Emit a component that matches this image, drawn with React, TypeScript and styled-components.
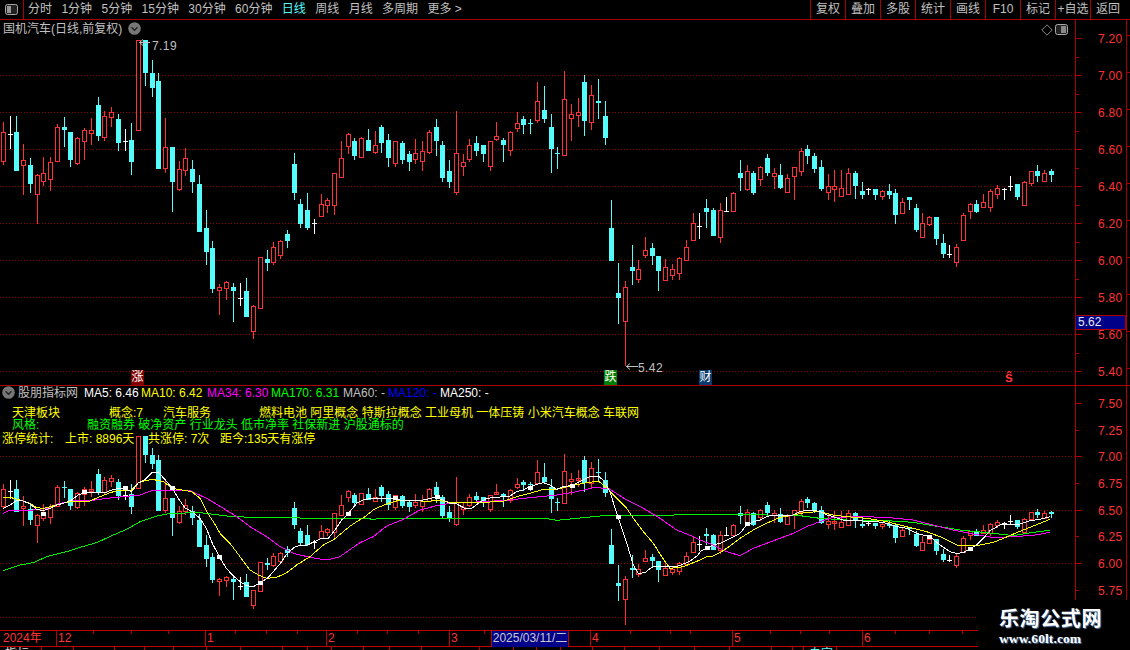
import React from "react";
import styled, { createGlobalStyle } from "styled-components";

type Candle = [number, string, number, number, number, number];
type Pt = [number, number];

const FONT = `"Liberation Sans", "Noto Sans CJK SC", sans-serif`;
const RED = "#ff3232";
const CYAN = "#54fcfc";
const LINE = "#a80000";

const GlobalStyle = createGlobalStyle`
  html, body { margin: 0; padding: 0; background: #000; overflow: hidden; }
  #root { width: 1130px; height: 650px; }
`;

const groupA: (string | number)[][] = [
  [10,"r",276,306,392,405],[31,"w",258,313,313,357],[49,"c",258,306,423,423],[70,"r",342,391,404,495],[91,"c",384,405,462,489],
  [112,"r",432,436,491,582],[130,"r",381,430,452,468],[151,"r",381,397,446,483],[172,"r",282,292,392,396],[193,"c",261,291,300,351],
  [211,"c",306,306,390,411],[232,"r",321,325,399,405],[253,"r",294,301,332,390],[274,"r",264,301,308,345],[295,"c",201,225,318,333],
  [313,"r",243,259,320,333],[334,"r",231,247,260,291],[355,"c",252,267,339,363],[376,"w",297,334,334,363],[394,"c",279,330,396,435],
  [415,"r",30,30,299,299],[436,"c",30,30,129,168],[457,"c",90,129,174,201],[475,"c",129,153,417,417],[496,"r",264,352,413,429],
  [517,"c",352,352,456,546],[538,"r",393,418,476,483],[556,"r",354,385,419,438],[577,"c",390,417,456,489],[598,"c",435,462,606,606],
  [619,"c",540,594,666,705],[637,"c",633,654,777,789],[658,"r",762,772,779,855],[679,"r",753,757,773,810],[700,"c",759,771,783,876],
  [721,"w",759,804,804,828],[739,"c",744,783,861,861],[760,"r",825,829,902,927],[781,"r",680,680,833,833],[802,"c",660,687,699,723],
  [820,"r",636,652,695,705],[841,"r",630,634,674,687],[862,"c",600,612,633,654],[883,"c",369,402,489,510],[901,"c",507,522,582,594],
  [922,"c",489,540,594,600],
];
const groupB: (string | number)[][] = [
  [13,"w",477,490,490,522],[34,"r",402,433,467,467],[52,"r",414,421,434,459],[73,"r",340,340,434,465],[94,"r",243,295,350,354],
  [115,"r",219,223,257,282],[133,"c",234,243,288,300],[154,"r",232,235,291,294],[175,"c",207,240,273,273],[196,"r",213,256,275,282],
  [214,"c",195,201,249,279],[235,"c",222,240,294,321],[256,"r",244,244,308,321],[277,"c",243,249,300,312],[298,"c",273,282,306,333],
  [316,"r",237,280,296,312],[337,"r",243,274,302,333],[358,"r",210,216,276,282],[379,"c",177,201,243,288],[397,"c",243,255,354,366],
  [418,"c",300,333,366,384],[439,"r",153,280,395,405],[460,"r",282,307,317,348],[478,"r",237,256,297,306],[499,"c",228,249,273,288],
  [520,"c",255,255,282,306],[541,"r",243,244,318,333],[559,"r",186,229,236,243],[580,"c",234,240,255,306],[601,"r",213,217,269,288],
  [622,"r",157,190,204,216],[640,"c",168,177,195,222],[661,"c",177,190,193,222],[682,"r",66,124,180,189],[703,"c",78,150,177,189],
  [724,"c",162,201,267,339],[742,"c",261,280,283,327],[763,"r",33,118,285,288],[784,"r",132,163,173,243],[805,"r",114,157,164,201],
  [823,"c",45,66,183,228],[844,"r",75,106,185,210],[865,"c",57,123,129,177],[886,"c",123,168,234,255],[904,"c",420,504,603,603],
  [925,"c",609,699,714,792],[946,"r",663,682,782,918],[967,"c",555,621,633,675],[985,"r",600,628,656,669],[1006,"r",531,571,584,594],
  [1027,"c",549,564,588,615],[1045,"c",588,588,633,693],
];
const groupC: (string | number)[][] = [
  [16,"r",387,411,450,450],[37,"r",402,418,435,450],[58,"r",381,385,428,450],[79,"r",330,351,390,393],[100,"r",249,280,330,330],
  [118,"w",249,289,289,327],[139,"c",207,234,246,294],[160,"c",234,240,318,318],[181,"r",219,241,321,339],[199,"w",201,242,242,246],
  [220,"r",186,190,243,243],[241,"c",90,129,144,183],[262,"r",105,124,177,183],[280,"c",123,129,189,195],[301,"r",108,112,147,168],
  [322,"c",72,84,129,138],[343,"r",114,130,137,177],[361,"c",102,135,174,177],[382,"r",132,145,186,186],[403,"r",111,112,137,210],
  [424,"r",54,64,124,138],[442,"c",45,57,78,102],[463,"c",69,78,117,129],[484,"c",90,111,177,183],[505,"r",132,169,186,210],
  [523,"r",120,169,176,216],[544,"r",120,175,198,201],[565,"r",114,130,191,192],[586,"c",123,129,168,207],[607,"c",156,183,195,207],
  [625,"w",174,177,177,195],[646,"c",177,177,195,210],[667,"r",180,184,197,210],[688,"c",162,183,195,207],[706,"c",177,189,255,282],
  [727,"r",204,217,248,248],[748,"c",201,201,210,240],[769,"c",222,234,300,306],[787,"r",249,280,320,320],[808,"r",258,262,282,288],
  [829,"c",261,261,327,345],[850,"c",312,339,372,384],[868,"w",345,373,373,384],[889,"r",342,352,396,411],[910,"r",249,256,330,333],
  [931,"r",219,223,242,267],[949,"c",210,222,246,249],[970,"r",192,217,231,234],[991,"r",177,184,231,246],[1012,"r",165,175,191,207],
  [1033,"w",174,178,178,210],[1051,"w",138,169,169,183],[1072,"c",162,162,201,210],[1093,"r",153,157,224,225],[1114,"r",123,124,158,168],
  [1132,"c",105,123,138,156],[1153,"r",120,130,153,153],[1174,"c",117,123,135,156],
];

const toCandles = (g: (string | number)[][], xo: number, yo: number): Candle[] =>
  g.map((c) => [
    Math.round(xo + (c[0] as number) / 3),
    c[1] as string,
    yo + (c[2] as number) / 3,
    yo + (c[3] as number) / 3,
    yo + (c[4] as number) / 3,
    yo + (c[5] as number) / 3,
  ]);

const candles: Candle[] = [...toCandles(groupA, 0, 30), ...toCandles(groupB, 310, 60), ...toCandles(groupC, 660, 130)];

const lower = (y: number) => 435 + (y - 38) * 0.5795;
const lowerCandles: Candle[] = candles.map((c) => [c[0], c[1], lower(c[2]), lower(c[3]), lower(c[4]), lower(c[5])]);

const seg = (pts: number[], xo: number, yo: number): Pt[] => {
  const out: Pt[] = [];
  for (let i = 0; i < pts.length; i += 2) out.push([xo + pts[i] / 3, yo + pts[i + 1] / 3]);
  return out;
};

const white = [
  ...seg([10,205,30,195,50,182,70,183,90,192,110,208,130,212,150,205,172,195,195,188,215,180,235,165,255,158,295,158,315,158,335,150,355,145,375,148,395,155,415,128,436,118,457,97,475,96,496,120,517,145,538,180,556,205,577,215,600,235,619,265,637,310,658,350,679,385,700,408,721,425,739,437,760,440,781,428,802,415,820,395,841,370,862,340,883,322,901,316,922,315,943,305,964,295,985,295,1005,270,1025,240,1044,222], 0, 440),
  ...seg([20,190,40,180,60,176,80,174,100,176,130,176,150,180,170,180,200,183,230,178,255,172,280,180,300,190,320,192,345,205,365,205,385,190,410,175,440,172,460,170,480,168,500,155,520,150,540,140,560,133,580,128,600,135,620,148,640,140,660,137,680,130,700,120,720,110,745,108,765,125,780,155,800,220,820,280,835,325,850,375,865,400,885,398,905,382,925,378,945,380,965,378,985,378,1005,370,1025,360,1045,345], 350, 440),
  ...seg([0,245,20,235,40,225,60,220,80,210,100,200,120,190,140,165,160,155,180,150,200,140,220,135,240,135,260,135,280,135,300,125,320,120,340,120,360,125,380,135,400,140,430,150,470,150,500,155,530,155,560,160,590,170,620,175,650,190,690,200,720,225,750,245,770,250,790,248,810,237,830,225,850,205,870,182,900,165,930,162,960,162,990,152,1020,148,1050,140], 700, 470),
];
const yellow = [
  ...seg([10,172,30,172,60,180,90,190,110,203,130,205,150,200,180,192,210,185,240,185,270,183,300,170,330,158,360,150,395,150,415,128,436,122,457,118,490,125,517,145,545,150,575,155,600,175,620,215,640,245,660,280,690,310,720,350,750,390,775,405,800,415,830,412,860,398,890,375,930,350,970,315,1000,300,1030,275,1048,260], 0, 440),
  ...seg([20,245,45,230,70,210,90,200,115,190,150,180,190,180,230,185,260,180,300,187,350,187,400,187,460,184,500,170,540,160,580,148,620,148,660,138,700,130,745,123,775,148,800,175,830,205,850,235,880,275,910,310,935,350,960,385,1000,380,1045,362], 350, 440),
  ...seg([0,270,20,260,40,258,60,248,80,235,120,205,160,180,200,160,240,142,280,135,320,127,360,125,400,135,440,140,500,145,560,155,620,170,680,185,720,200,770,225,830,227,880,217,910,205,950,188,1000,168,1050,148], 700, 470),
];
const magenta = [
  ...seg([10,220,25,212,60,210,100,210,140,205,180,190,220,183,270,182,320,175,370,170,420,165,460,150,520,150,570,152,620,175,670,205,710,230,750,260,800,290,840,320,880,340,930,352,980,360,1020,350,1048,330], 0, 440),
  ...seg([30,308,70,290,110,258,160,238,210,210,260,197,300,190,400,185,480,180,540,173,620,165,680,155,730,143,775,145,830,180,880,205,930,235,980,270,1030,290,1045,298], 350, 440),
  ...seg([0,210,40,225,80,245,120,257,160,235,240,205,280,190,320,170,360,155,400,142,480,140,560,142,640,150,700,165,760,180,820,192,880,203,940,200,1000,196,1050,187], 700, 470),
];
const green = [
  ...seg([10,392,60,375,100,368,140,350,200,335,240,322,290,308,340,285,380,268,420,245,470,228,510,220,600,218,680,228,750,232,1045,236], 0, 440),
  ...seg([60,236,65,239,85,236,590,236,620,241,680,235,750,228,900,226,1045,224], 350, 440),
  ...seg([0,133,200,135,300,137,360,145,440,150,560,152,640,157,700,167,780,180,880,190,940,197,1000,187,1050,181], 700, 470),
];
const dots: Pt[] = [[43,514],[84,492],[125,488],[172,488],[219,557],[260,583],[348,514],[395,498],[437,497],[530,488],[572,486],[618,517],[707,548],[747,524],[929,537],[970,549]];

const poly = (p: Pt[]) => p.map((q) => q.join(",")).join(" ");

/* ---------- Layout ---------- */
const Page = styled.div`
  position: relative;
  width: 1130px;
  height: 650px;
  background: #000;
  overflow: hidden;
  display: flex;
  flex-direction: column;
  font: 12px/14px ${FONT};
  color: #c0c0c0;
`;
const Toolbar = styled.header`
  height: 19px;
  box-sizing: content-box;
  border-bottom: 1px solid ${LINE};
  display: flex;
  align-items: stretch;
  padding-right: 5px;
`;
const ToggleCell = styled.div`
  width: 23px;
  border-right: 1px solid ${LINE};
  display: flex;
  align-items: center;
  justify-content: center;
`;
const PeriodList = styled.nav`
  display: flex;
  align-items: center;
  gap: 9.4px;
  padding-left: 4px;
`;
const Period = styled.span<{ $active?: boolean }>`
  color: ${(p) => (p.$active ? CYAN : "#c0c0c0")};
  white-space: nowrap;
`;
const ActionList = styled.div`
  display: flex;
  margin-left: auto;
`;
const Action = styled.span`
  width: 35px;
  box-sizing: border-box;
  border-left: 1px solid ${LINE};
  display: flex;
  align-items: center;
  justify-content: center;
  white-space: nowrap;
`;
const Pane = styled.section<{ $h: number }>`
  position: relative;
  display: flex;
  height: ${(p) => p.$h}px;
`;
const UpperPane = styled(Pane)`
  border-bottom: 1px solid ${LINE};
`;
const ChartSvg = styled.svg`
  display: block;
  flex: none;
  shape-rendering: crispEdges;
`;
const AxisSvg = styled.svg`
  display: block;
  flex: none;
`;
const AxisText = styled.text`
  font: 12px ${FONT};
  fill: ${RED};
  letter-spacing: 0.3px;
`;
const ExtremeText = styled.text`
  font: 12px ${FONT};
  fill: #c0c0c0;
  letter-spacing: 0.4px;
`;
const Title = styled.div`
  position: absolute;
  top: 2px;
  left: 3px;
  display: flex;
  align-items: center;
  gap: 6px;
  white-space: nowrap;
`;
const CornerIcons = styled.div`
  position: absolute;
  top: 4px;
  left: 1041px;
  display: flex;
  gap: 2px;
  align-items: center;
`;
const Badge = styled.span<{ $x: number; $bg: string }>`
  position: absolute;
  bottom: 0;
  left: ${(p) => p.$x}px;
  width: 13px;
  height: 15px;
  background: ${(p) => p.$bg};
  color: #fff;
  text-align: center;
  line-height: 15px;
`;
const SignMark = styled.span`
  position: absolute;
  bottom: 0;
  left: 1005px;
  color: ${RED};
  font-size: 14px;
  font-weight: 700;
  line-height: 15px;
`;
const PriceTag = styled.div`
  position: absolute;
  left: 1075px;
  top: 295px;
  width: 51px;
  height: 15px;
  box-sizing: border-box;
  border: 1px solid ${LINE};
  background: #000088;
  color: #e8e8e8;
  padding-left: 2px;
  line-height: 13px;
`;
const Overlay = styled.div`
  position: absolute;
  top: 0;
  left: 0;
  display: flex;
  flex-direction: column;
  white-space: nowrap;
`;
const Legend = styled.div`
  display: flex;
  align-items: center;
  height: 14px;
  padding-left: 2px;
`;
const LegendName = styled.span`
  margin: 0 6px 0 3px;
`;
const LegendItem = styled.span<{ $color: string; $w: number }>`
  color: ${(p) => p.$color};
  width: ${(p) => p.$w}px;
`;
const InfoLine = styled.div<{ $cols: string; $left: number; $color: string; $gap?: number }>`
  display: grid;
  grid-template-columns: ${(p) => p.$cols};
  padding-left: ${(p) => p.$left}px;
  margin-top: ${(p) => p.$gap ?? 0}px;
  height: 12px;
  line-height: 12px;
  color: ${(p) => p.$color};
`;
const TimeAxis = styled.div`
  position: relative;
  width: 978px;
  height: 16px;
  border-top: 1px solid #c00000;
  border-bottom: 1px solid #c00000;
  box-sizing: content-box;
  display: flex;
  color: ${RED};
  line-height: 15px;
`;
const TimeCell = styled.span<{ $w: number }>`
  width: ${(p) => p.$w}px;
  box-sizing: border-box;
  border-left: 1px solid #c00000;
  padding-left: 1px;
  &:first-child {
    border-left: 0;
    padding-left: 3px;
  }
`;
const TickStrip = styled.svg`
  position: absolute;
  top: 0;
  left: 0;
  shape-rendering: crispEdges;
`;
const DateTag = styled.span`
  position: absolute;
  left: 491px;
  top: 0;
  width: 78px;
  height: 16px;
  background: #000088;
  border: solid #c00000;
  border-width: 0 1px;
  box-sizing: border-box;
  color: #c8c8c8;
  text-align: center;
  white-space: nowrap;
  overflow: hidden;
  line-height: 15px;
`;
const TabRow = styled.footer`
  display: flex;
  height: 3px;
  overflow: hidden;
  line-height: 14px;
`;
const Tab = styled.span<{ $w: number; $color?: string }>`
  width: ${(p) => p.$w}px;
  flex: none;
  box-sizing: border-box;
  border-right: 1px solid #c00000;
  padding-left: 5px;
  color: ${(p) => p.$color ?? "#e0e0e0"};
  white-space: nowrap;
`;
const Watermark = styled.aside`
  position: absolute;
  right: 0;
  bottom: 0;
  width: 152px;
  height: 50px;
  background: #000;
  display: flex;
  flex-direction: column;
  padding: 6px 0 0 21px;
  box-sizing: border-box;
  color: #fff;
  font-weight: 700;
`;
const MarkTitle = styled.div`
  font: 700 20px/24px "Noto Sans CJK SC", sans-serif;
  letter-spacing: 0.6px;
  text-shadow: 1px 1px 1px #5a78a0;
`;
const MarkUrl = styled.div`
  font: 700 13.5px/14px "Liberation Serif", serif;
  margin-top: 2px;
  letter-spacing: 0.1px;
  text-shadow: 1px 1px 1px #5a78a0;
`;

/* ---------- Drawings ---------- */
const Toggle = ({ leftLit }: { leftLit?: boolean }) => (
  <svg width="13" height="11" viewBox="0 0 13 11">
    <rect x="0.5" y="0.5" width="12" height="10" rx="2" fill="#222" stroke="#a8a8a8" />
    <rect x={leftLit ? 2 : 6} y="2" width={leftLit ? 4 : 5} height="7" fill={leftLit ? "#999" : "#888"} />
  </svg>
);
const Chevron = () => (
  <svg width="13" height="13" viewBox="0 0 13 13">
    <circle cx="6.5" cy="6.5" r="6.3" fill="#777" />
    <path d="M3.5 5.2 L6.5 8.2 L9.5 5.2" fill="none" stroke="#222" strokeWidth="1.4" />
  </svg>
);
const Diamond = () => (
  <svg width="12" height="12" viewBox="0 0 12 12">
    <path d="M6 .8 L11.2 6 L6 11.2 L.8 6 Z" fill="none" stroke="#888" />
  </svg>
);

const CandleMark = ({ c }: { c: Candle }) => {
  const [x, t, hi, top, bot, lo] = c;
  const [h, a, b, l] = [hi, top, bot, lo].map(Math.round);
  const cx = x + 0.5;
  if (t === "r")
    return (
      <g stroke={RED} fill="none">
        {h < a && <line x1={cx} x2={cx} y1={h} y2={a} />}
        <rect x={x - 1.5} y={a + 0.5} width={4} height={Math.max(b - a, 2)} fill="#000" />
        {l > b && <line x1={cx} x2={cx} y1={b} y2={l} />}
      </g>
    );
  if (t === "c")
    return (
      <g>
        <line x1={cx} x2={cx} y1={h} y2={l} stroke={CYAN} />
        <rect x={x - 2} y={a} width={5} height={Math.max(b - a, 1)} fill={CYAN} />
      </g>
    );
  return (
    <g stroke="#fff">
      <line x1={cx} x2={cx} y1={h} y2={l} />
      <line x1={x - 2} x2={x + 3} y1={a + 0.5} y2={a + 0.5} />
    </g>
  );
};

const Grid = ({ ys, w }: { ys: number[]; w: number }) => (
  <g stroke="#900000" strokeDasharray="1 2">
    {ys.map((y) => (
      <line key={y} x1={0} x2={w} y1={y + 0.5} y2={y + 0.5} />
    ))}
  </g>
);

const TOP_GRID = [75, 112, 149, 186, 223, 260, 297, 334, 371];
const TOP_AXIS: [string, number][] = [["7.20",38],["7.00",75],["6.80",112],["6.60",149],["6.40",186],["6.20",223],["6.00",260],["5.80",297],["5.60",334],["5.40",371]];
const LOW_AXIS: [string, number][] = [["7.50",403],["7.25",430],["7.00",456],["6.75",483],["6.50",510],["6.25",536],["6.00",563],["5.75",590]];

const TopChart = () => (
  <ChartSvg width="1075" height="365" viewBox="0 20 1075 365">
    <Grid ys={TOP_GRID} w={1075} />
    {candles.map((c, i) => (
      <CandleMark key={i} c={c} />
    ))}
    <g stroke="#c0c0c0" fill="none" style={{ shapeRendering: "auto" }}>
      <path d="M150 42.5 H139 M143 39.5 L139.5 42.5 L143 45.5" />
      <path d="M638 366.5 H626 M630 363.5 L626.5 366.5 L630 369.5" />
    </g>
    <ExtremeText x="152" y="50">7.19</ExtremeText>
    <ExtremeText x="638" y="372">5.42</ExtremeText>
  </ChartSvg>
);

const TopAxis = () => (
  <AxisSvg width="55" height="365" viewBox="1075 20 55 365">
    <g stroke={LINE} shapeRendering="crispEdges">
      <line x1="1075.5" x2="1075.5" y1="20" y2="385" />
      <line x1="1126.5" x2="1126.5" y1="20" y2="385" />
      {TOP_AXIS.map(([, y]) => (
        <g key={y}>
          <line x1="1075" x2="1082" y1={y + 0.5} y2={y + 0.5} />
          <line x1="1075" x2="1079" y1={y + 19} y2={y + 19} />
          <line x1="1126" x2="1130" y1={y - 2.5} y2={y - 2.5} />
        </g>
      ))}
    </g>
    {TOP_AXIS.map(([t, y]) => (
      <AxisText key={t} x="1098" y={y + 5}>{t}</AxisText>
    ))}
  </AxisSvg>
);

const LowChart = () => (
  <ChartSvg width="1075" height="244" viewBox="0 386 1075 244">
    <Grid ys={[456, 510, 563]} w={1075} />
    <Grid ys={[617]} w={978} />
    {lowerCandles.map((c, i) => (
      <CandleMark key={i} c={c} />
    ))}
    <g fill="none">
      <polyline points={poly(green)} stroke="#00f000" />
      <polyline points={poly(magenta)} stroke="#ff00ff" />
      <polyline points={poly(yellow)} stroke="#ffff00" />
      <polyline points={poly(white)} stroke="#ffffff" />
    </g>
    {dots.map(([x, y]) => (
      <rect key={x} x={x - 2} y={y - 2} width="5" height="4" fill="#fff" />
    ))}
  </ChartSvg>
);

const LowAxis = () => (
  <AxisSvg width="55" height="244" viewBox="1075 386 55 244">
    <g stroke="#b00000" shapeRendering="crispEdges">
      <line x1="1075.5" x2="1075.5" y1="386" y2="600" />
      <line x1="1126.5" x2="1126.5" y1="386" y2="600" />
      {LOW_AXIS.map(([, y], i) => (
        <line key={y} x1="1075" x2={i % 2 ? 1079 : 1082} y1={y + 0.5} y2={y + 0.5} />
      ))}
    </g>
    {LOW_AXIS.map(([t, y]) => (
      <AxisText key={t} x="1098" y={y + 5}>{t}</AxisText>
    ))}
  </AxisSvg>
);

const PERIODS = ["分时","1分钟","5分钟","15分钟","30分钟","60分钟","日线","周线","月线","多周期","更多 >"];
const ACTIONS = ["复权","叠加","多股","统计","画线","F10","标记","+自选","返回"];
const MA: [string, string, number][] = [
  ["MA5: 6.46","#ffffff",57],["MA10: 6.42","#ffff00",66],["MA34: 6.30","#ff00ff",64],["MA170: 6.31","#00ff00",72],
  ["MA60: -","#c0c0c0",45],["MA120: -","#0000ff",52],["MA250: -","#ffffff",50],
];
const TIME_CELLS: [string, number][] = [["2024年",56],["12",149],["1",121],["2",123],["3",141],["4",142],["5",130],["6",116]];
const TABS = [42,32,41,30,29,33,34,42,25,24,32,26,32,58,34,23,24,32,32,35,35,35,42,21,11,33];
const TICKS = [93,131,168,235,266,297,357,387,418,484,630,670,690,770,800,829,895,929,962];

export default function App() {
  return (
    <Page>
      <GlobalStyle />
      <Toolbar>
        <ToggleCell>
          <Toggle leftLit />
        </ToggleCell>
        <PeriodList>
          {PERIODS.map((p) => (
            <Period key={p} $active={p === "日线"}>{p}</Period>
          ))}
        </PeriodList>
        <ActionList>
          {ACTIONS.map((a) => (
            <Action key={a}>{a}</Action>
          ))}
        </ActionList>
      </Toolbar>

      <UpperPane $h={365}>
        <TopChart />
        <TopAxis />
        <Title>
          国机汽车(日线,前复权)
          <Chevron />
        </Title>
        <CornerIcons>
          <Diamond />
          <Toggle />
        </CornerIcons>
        <Badge $x={131} $bg="#800000">涨</Badge>
        <Badge $x={604} $bg="#008000">跌</Badge>
        <Badge $x={699} $bg="#0a3a6e">财</Badge>
        <SignMark>ŝ</SignMark>
        <PriceTag>5.62</PriceTag>
      </UpperPane>

      <Pane $h={244}>
        <LowChart />
        <LowAxis />
        <Overlay>
          <Legend>
            <Chevron />
            <LegendName>股朋指标网</LegendName>
            {MA.map(([t, c, w]) => (
              <LegendItem key={t} $color={c} $w={w}>{t}</LegendItem>
            ))}
          </Legend>
          <InfoLine $cols="97px 54px 96px auto" $left={12} $color="#ffff00" $gap={7}>
            <span>天津板块</span>
            <span>概念:7</span>
            <span>汽车服务</span>
            <span>燃料电池 阿里概念 特斯拉概念 工业母机 一体压铸 小米汽车概念 车联网</span>
          </InfoLine>
          <InfoLine $cols="75px auto" $left={12} $color="#00ff00">
            <span>风格:</span>
            <span>融资融券 破净资产 行业龙头 低市净率 社保新进 沪股通标的</span>
          </InfoLine>
          <InfoLine $cols="63px 83px 72px auto" $left={2} $color="#ffff00" $gap={2}>
            <span>涨停统计:</span>
            <span>上市: 8896天</span>
            <span>共涨停: 7次</span>
            <span>距今:135天有涨停</span>
          </InfoLine>
        </Overlay>
      </Pane>

      <TimeAxis>
        {TIME_CELLS.map(([t, w]) => (
          <TimeCell key={t} $w={w}>{t}</TimeCell>
        ))}
        <TickStrip width="978" height="3">
          {TICKS.map((x) => (
            <line key={x} x1={x + 0.5} x2={x + 0.5} y1="0" y2="3" stroke="#c00000" />
          ))}
        </TickStrip>
        <DateTag>2025/03/11/二</DateTag>
      </TimeAxis>

      <TabRow>
        {TABS.map((w, i) => (
          <Tab key={i} $w={w} $color={i === 25 ? CYAN : undefined}>
            {i === 0 ? "指标" : i === 25 ? "自定" : ""}
          </Tab>
        ))}
      </TabRow>

      <Watermark>
        <MarkTitle>乐淘公式网</MarkTitle>
        <MarkUrl>www.60lt.com</MarkUrl>
      </Watermark>
    </Page>
  );
}
